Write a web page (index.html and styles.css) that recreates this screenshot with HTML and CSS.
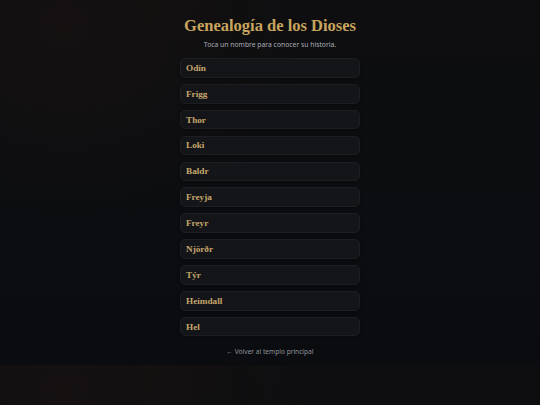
FILE: index.html
```html
<!DOCTYPE html>
<html lang="es">
<head>
<meta charset="utf-8">
<title>Genealogía de los Dioses</title>
<link rel="stylesheet" href="styles.css">
</head>
<body>
<main class="page">
  <h1 class="title">Genealogía de los Dioses</h1>
  <p class="subtitle">Toca un nombre para conocer su historia.</p>
  <ul class="gods">
    <li class="god">Odín</li>
    <li class="god">Frigg</li>
    <li class="god">Thor</li>
    <li class="god">Loki</li>
    <li class="god">Baldr</li>
    <li class="god">Freyja</li>
    <li class="god">Freyr</li>
    <li class="god">Njörðr</li>
    <li class="god">Týr</li>
    <li class="god">Heimdall</li>
    <li class="god">Hel</li>
  </ul>
  <a class="back" href="#">← Volver al templo principal</a>
</main>
</body>
</html>
```

FILE: styles.css
```css
body {
  margin: 0;
  background:
    radial-gradient(ellipse 45% 55% at 12% 8%, rgba(60, 32, 22, 0.16), rgba(60, 32, 22, 0) 100%),
    linear-gradient(180deg, #0e0e10 0%, #0b0d10 60%, #0a0c0f 100%);
  font-family: "Noto Sans", "Open Sans", sans-serif;
}
.page {
  width: 180px;
  margin: 0 auto;
  padding: 15px 0 9px;
  display: flex;
  flex-direction: column;
  align-items: stretch;
}
.title {
  margin: 0;
  font-family: "Liberation Serif", "DejaVu Serif", serif;
  font-weight: 700;
  font-size: 16.5px;
  line-height: 21px;
  text-align: center;
  color: #c8a45e;
  white-space: nowrap;
}
.subtitle {
  margin: 4px 0 0;
  font-size: 6.8px;
  line-height: 9px;
  text-align: center;
  color: #a9adb3;
}
.gods {
  list-style: none;
  margin: 9px 0 0;
  padding: 0;
  display: flex;
  flex-direction: column;
  gap: 6.2px;
}
.god {
  height: 19.7px;
  box-sizing: border-box;
  padding: 0 5px;
  display: flex;
  align-items: center;
  background: #131518;
  border: 1px solid #1c1e22;
  border-radius: 5px;
  box-shadow: 0 1px 3px rgba(0, 0, 0, 0.35);
  font-family: "Liberation Serif", "DejaVu Serif", serif;
  font-weight: 700;
  font-size: 9.2px;
  color: #c6a66c;
}
.back {
  align-self: center;
  margin-top: 11px;
  font-size: 6.6px;
  line-height: 9px;
  color: #8f939a;
  text-decoration: none;
}
```
